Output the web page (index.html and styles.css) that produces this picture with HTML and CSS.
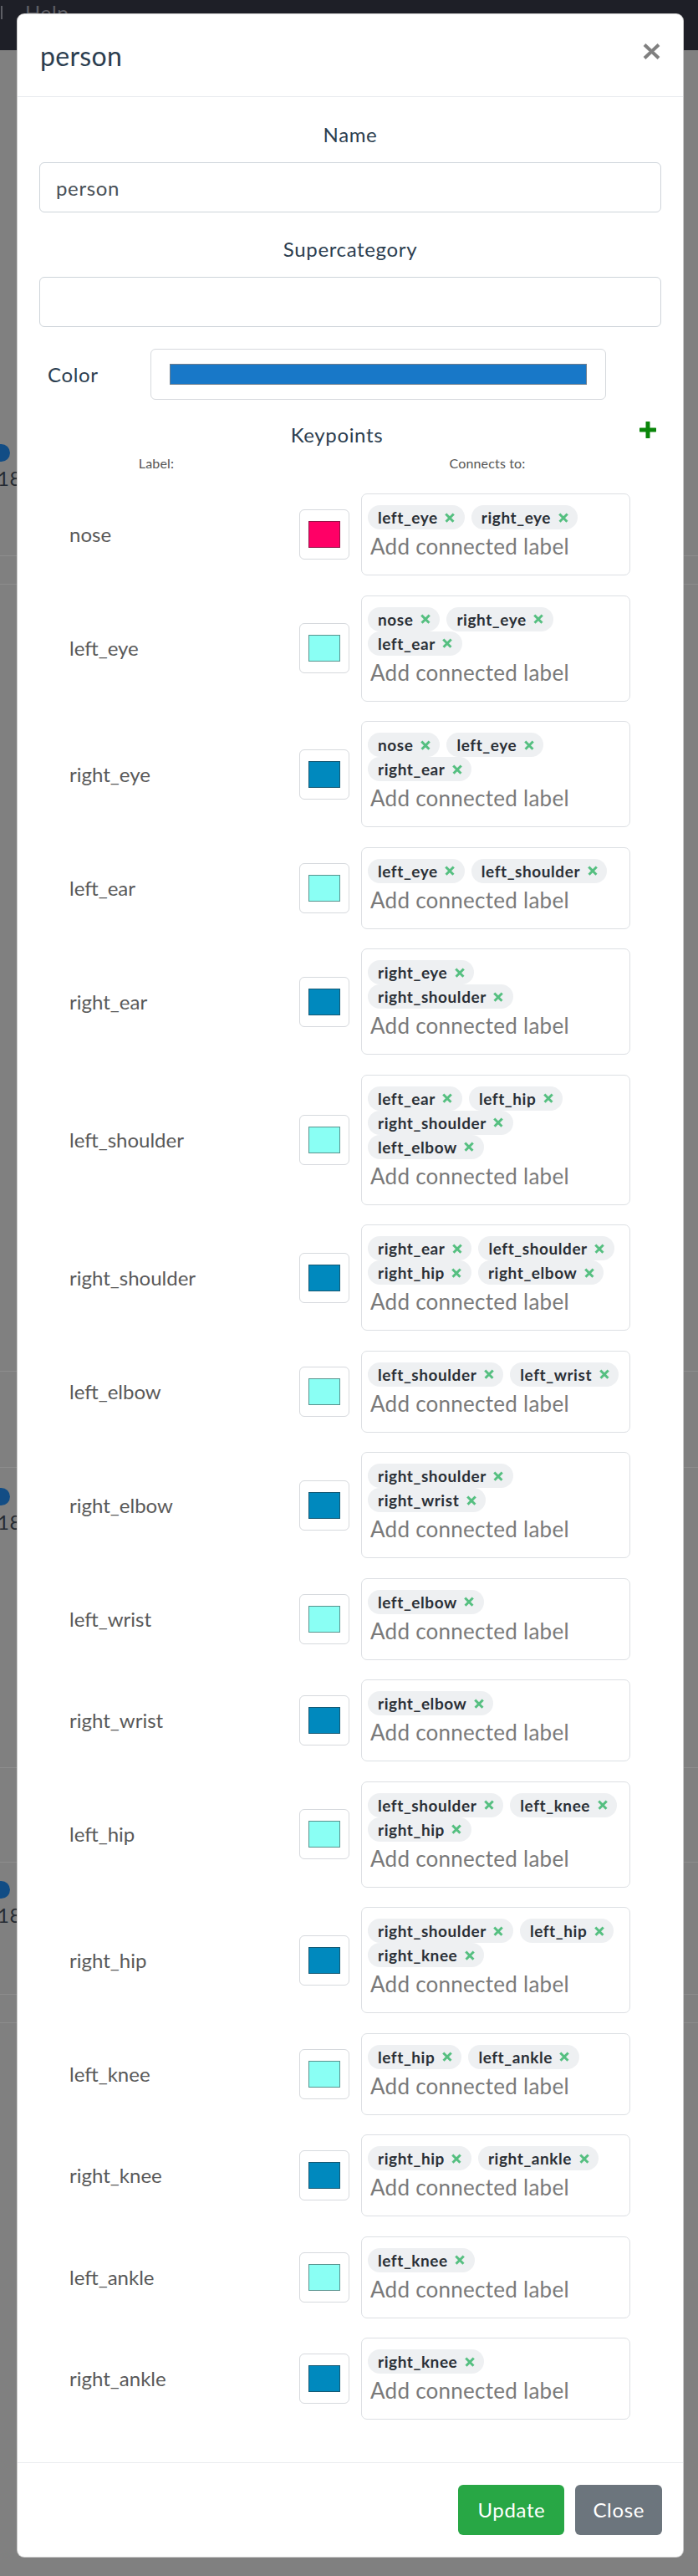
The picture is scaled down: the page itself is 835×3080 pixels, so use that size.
FILE: index.html
```html
<!DOCTYPE html>
<html lang="en">
<head>
<meta charset="utf-8">
<title>person</title>
<link rel="stylesheet" href="styles.css">
</head>
<body>
<div class="page">
  <nav class="navbar">
    <span class="nav-mark"></span>
    <span class="nav-link">Help</span>
  </nav>
  <div class="bg-list">
    <div class="bg-block bg-a"><div class="bg-entry"><span class="bg-dot"></span><span class="bg-num">18</span></div></div>
    <div class="bg-block bg-b"></div>
    <div class="bg-block bg-c"></div>
    <div class="bg-block bg-d"></div>
    <div class="bg-block bg-e"><div class="bg-entry"><span class="bg-dot"></span><span class="bg-num">18</span></div></div>
    <div class="bg-block bg-f"></div>
    <div class="bg-block bg-g"><div class="bg-entry"><span class="bg-dot"></span><span class="bg-num">18</span></div></div>
    <div class="bg-block bg-h"></div>
  </div>
</div>

<div class="modal">
  <div class="modal-header">
    <h5 class="modal-title">person</h5>
    <button class="close" type="button" aria-label="Close">
      <svg width="21" height="19" viewBox="0 0 21 19"><path d="M2 1.5 L19 17.5 M19 1.5 L2 17.5" stroke="#808080" stroke-width="4" fill="none"/></svg>
    </button>
  </div>

  <div class="modal-body">
    <div class="form-group">
      <label class="form-label">Name</label>
      <input class="form-control" type="text" value="person">
    </div>
    <div class="form-group">
      <label class="form-label">Supercategory</label>
      <input class="form-control" type="text" value="">
    </div>

    <div class="color-row">
      <span class="color-label">Color</span>
      <div class="color-box"><span class="color-bar"></span></div>
    </div>

    <div class="kp-title-row">
      <span class="kp-title">Keypoints</span>
      <svg class="plus" width="20" height="20" viewBox="0 0 20 20"><path d="M10 1 V19 M1 10 H19" stroke="#0a860a" stroke-width="5" stroke-linecap="round" fill="none"/></svg>
    </div>

    <div class="kp-head">
      <span class="kp-head-label">Label:</span>
      <span class="kp-head-conn">Connects to:</span>
    </div>

    <div class="kp-list">
      <div class="kp-row">
        <div class="kp-label">nose</div>
        <div class="kp-color"><span class="swatch c-pink"></span></div>
        <div class="kp-conn">
          <div class="tag-line"><span class="tag">left_eye<i class="tag-x"></i></span><span class="tag">right_eye<i class="tag-x"></i></span></div>
          <input class="conn-input" type="text" placeholder="Add connected label">
        </div>
      </div>

      <div class="kp-row">
        <div class="kp-label">left_eye</div>
        <div class="kp-color"><span class="swatch c-cyan"></span></div>
        <div class="kp-conn">
          <div class="tag-line"><span class="tag">nose<i class="tag-x"></i></span><span class="tag">right_eye<i class="tag-x"></i></span></div>
          <div class="tag-line"><span class="tag">left_ear<i class="tag-x"></i></span></div>
          <input class="conn-input" type="text" placeholder="Add connected label">
        </div>
      </div>

      <div class="kp-row">
        <div class="kp-label">right_eye</div>
        <div class="kp-color"><span class="swatch c-blue"></span></div>
        <div class="kp-conn">
          <div class="tag-line"><span class="tag">nose<i class="tag-x"></i></span><span class="tag">left_eye<i class="tag-x"></i></span></div>
          <div class="tag-line"><span class="tag">right_ear<i class="tag-x"></i></span></div>
          <input class="conn-input" type="text" placeholder="Add connected label">
        </div>
      </div>

      <div class="kp-row">
        <div class="kp-label">left_ear</div>
        <div class="kp-color"><span class="swatch c-cyan"></span></div>
        <div class="kp-conn">
          <div class="tag-line"><span class="tag">left_eye<i class="tag-x"></i></span><span class="tag">left_shoulder<i class="tag-x"></i></span></div>
          <input class="conn-input" type="text" placeholder="Add connected label">
        </div>
      </div>

      <div class="kp-row">
        <div class="kp-label">right_ear</div>
        <div class="kp-color"><span class="swatch c-blue"></span></div>
        <div class="kp-conn">
          <div class="tag-line"><span class="tag">right_eye<i class="tag-x"></i></span></div>
          <div class="tag-line"><span class="tag">right_shoulder<i class="tag-x"></i></span></div>
          <input class="conn-input" type="text" placeholder="Add connected label">
        </div>
      </div>

      <div class="kp-row">
        <div class="kp-label">left_shoulder</div>
        <div class="kp-color"><span class="swatch c-cyan"></span></div>
        <div class="kp-conn">
          <div class="tag-line"><span class="tag">left_ear<i class="tag-x"></i></span><span class="tag">left_hip<i class="tag-x"></i></span></div>
          <div class="tag-line"><span class="tag">right_shoulder<i class="tag-x"></i></span></div>
          <div class="tag-line"><span class="tag">left_elbow<i class="tag-x"></i></span></div>
          <input class="conn-input" type="text" placeholder="Add connected label">
        </div>
      </div>

      <div class="kp-row">
        <div class="kp-label">right_shoulder</div>
        <div class="kp-color"><span class="swatch c-blue"></span></div>
        <div class="kp-conn">
          <div class="tag-line"><span class="tag">right_ear<i class="tag-x"></i></span><span class="tag">left_shoulder<i class="tag-x"></i></span></div>
          <div class="tag-line"><span class="tag">right_hip<i class="tag-x"></i></span><span class="tag">right_elbow<i class="tag-x"></i></span></div>
          <input class="conn-input" type="text" placeholder="Add connected label">
        </div>
      </div>

      <div class="kp-row">
        <div class="kp-label">left_elbow</div>
        <div class="kp-color"><span class="swatch c-cyan"></span></div>
        <div class="kp-conn">
          <div class="tag-line"><span class="tag">left_shoulder<i class="tag-x"></i></span><span class="tag">left_wrist<i class="tag-x"></i></span></div>
          <input class="conn-input" type="text" placeholder="Add connected label">
        </div>
      </div>

      <div class="kp-row">
        <div class="kp-label">right_elbow</div>
        <div class="kp-color"><span class="swatch c-blue"></span></div>
        <div class="kp-conn">
          <div class="tag-line"><span class="tag">right_shoulder<i class="tag-x"></i></span></div>
          <div class="tag-line"><span class="tag">right_wrist<i class="tag-x"></i></span></div>
          <input class="conn-input" type="text" placeholder="Add connected label">
        </div>
      </div>

      <div class="kp-row">
        <div class="kp-label">left_wrist</div>
        <div class="kp-color"><span class="swatch c-cyan"></span></div>
        <div class="kp-conn">
          <div class="tag-line"><span class="tag">left_elbow<i class="tag-x"></i></span></div>
          <input class="conn-input" type="text" placeholder="Add connected label">
        </div>
      </div>

      <div class="kp-row">
        <div class="kp-label">right_wrist</div>
        <div class="kp-color"><span class="swatch c-blue"></span></div>
        <div class="kp-conn">
          <div class="tag-line"><span class="tag">right_elbow<i class="tag-x"></i></span></div>
          <input class="conn-input" type="text" placeholder="Add connected label">
        </div>
      </div>

      <div class="kp-row">
        <div class="kp-label">left_hip</div>
        <div class="kp-color"><span class="swatch c-cyan"></span></div>
        <div class="kp-conn">
          <div class="tag-line"><span class="tag">left_shoulder<i class="tag-x"></i></span><span class="tag">left_knee<i class="tag-x"></i></span></div>
          <div class="tag-line"><span class="tag">right_hip<i class="tag-x"></i></span></div>
          <input class="conn-input" type="text" placeholder="Add connected label">
        </div>
      </div>

      <div class="kp-row">
        <div class="kp-label">right_hip</div>
        <div class="kp-color"><span class="swatch c-blue"></span></div>
        <div class="kp-conn">
          <div class="tag-line"><span class="tag">right_shoulder<i class="tag-x"></i></span><span class="tag">left_hip<i class="tag-x"></i></span></div>
          <div class="tag-line"><span class="tag">right_knee<i class="tag-x"></i></span></div>
          <input class="conn-input" type="text" placeholder="Add connected label">
        </div>
      </div>

      <div class="kp-row">
        <div class="kp-label">left_knee</div>
        <div class="kp-color"><span class="swatch c-cyan"></span></div>
        <div class="kp-conn">
          <div class="tag-line"><span class="tag">left_hip<i class="tag-x"></i></span><span class="tag">left_ankle<i class="tag-x"></i></span></div>
          <input class="conn-input" type="text" placeholder="Add connected label">
        </div>
      </div>

      <div class="kp-row">
        <div class="kp-label">right_knee</div>
        <div class="kp-color"><span class="swatch c-blue"></span></div>
        <div class="kp-conn">
          <div class="tag-line"><span class="tag">right_hip<i class="tag-x"></i></span><span class="tag">right_ankle<i class="tag-x"></i></span></div>
          <input class="conn-input" type="text" placeholder="Add connected label">
        </div>
      </div>

      <div class="kp-row">
        <div class="kp-label">left_ankle</div>
        <div class="kp-color"><span class="swatch c-cyan"></span></div>
        <div class="kp-conn">
          <div class="tag-line"><span class="tag">left_knee<i class="tag-x"></i></span></div>
          <input class="conn-input" type="text" placeholder="Add connected label">
        </div>
      </div>

      <div class="kp-row">
        <div class="kp-label">right_ankle</div>
        <div class="kp-color"><span class="swatch c-blue"></span></div>
        <div class="kp-conn">
          <div class="tag-line"><span class="tag">right_knee<i class="tag-x"></i></span></div>
          <input class="conn-input" type="text" placeholder="Add connected label">
        </div>
      </div>
    </div>
  </div>

  <div class="modal-footer">
    <button class="btn btn-success" type="button">Update</button>
    <button class="btn btn-secondary" type="button">Close</button>
  </div>
</div>
</body>
</html>
```

FILE: styles.css
```css
* { box-sizing: border-box; }

html, body {
  margin: 0;
  padding: 0;
}

body {
  width: 835px;
  height: 3080px;
  overflow: hidden;
  position: relative;
  background: #808080;
  font-family: Lato, "Liberation Sans", sans-serif;
  letter-spacing: 0.04em;
  color: #2c3e50;
}

/* ---------- dimmed page behind the modal ---------- */
.navbar {
  height: 60px;
  background: #1e1f27;
  display: flex;
  align-items: flex-start;
  color: #5e5f66;
  font-size: 24px;
  line-height: 36px;
}
.nav-mark {
  width: 2px;
  height: 16px;
  margin: 7px 0 0 1px;
  background: #5e5f66;
}
.nav-link {
  margin: -3px 0 0 27px;
}

.bg-block {
  border-bottom: 1px solid #8d8d8d;
}
.bg-a { height: 605px; padding-top: 471px; }
.bg-b { height: 34px; }
.bg-c { height: 941px; }
.bg-d { height: 115px; }
.bg-e { height: 359px; padding-top: 24px; }
.bg-f { height: 113px; }
.bg-g { height: 158px; padding-top: 22px; }
.bg-h { height: 34px; }

.bg-entry {
  display: flex;
  flex-direction: column;
  align-items: flex-start;
}
.bg-dot {
  width: 21px;
  height: 21px;
  margin-left: -9px;
  border-radius: 50%;
  background: #124d85;
}
.bg-num {
  margin: 6px 0 0 -3px;
  font-size: 24px;
  line-height: 28px;
  color: #252b33;
}

/* ---------- modal ---------- */
.modal {
  position: absolute;
  left: 20px;
  top: 16px;
  width: 798px;
  background: #fff;
  border: 1px solid rgba(0, 0, 0, 0.2);
  border-radius: 9px;
}

.modal-header {
  height: 99px;
  display: flex;
  align-items: center;
  justify-content: space-between;
  padding: 0 27px 0 27px;
  border-bottom: 1px solid #e9ecef;
}
.modal-title {
  margin: 0;
  font-size: 32px;
  line-height: 45px;
  font-weight: 400;
  letter-spacing: 0.01em;
  color: #2c3e50;
}
.close {
  display: flex;
  padding: 0;
  margin: 0 0 9px 0;
  border: 0;
  background: transparent;
}

.modal-body {
  padding: 27px 26px 27px 26px;
}

.form-group {
  display: flex;
  flex-direction: column;
  margin-bottom: 26px;
}
.form-label {
  text-align: center;
  font-size: 24px;
  line-height: 36px;
  margin-bottom: 15px;
  color: #2c3e50;
}
.form-control {
  height: 60px;
  width: 100%;
  padding: 0 19px;
  border: 1px solid #ced4da;
  border-radius: 6px;
  font-family: inherit;
  letter-spacing: inherit;
  font-size: 24px;
  color: #495057;
  background: #fff;
  outline: none;
}

.color-row {
  display: flex;
  align-items: center;
  padding-left: 10px;
}
.color-label {
  width: 123px;
  font-size: 24px;
  line-height: 36px;
  color: #2c3e50;
}
.color-box {
  width: 545px;
  height: 61px;
  padding: 17px 22px;
  border: 1px solid #d6d9dd;
  border-radius: 6px;
  display: flex;
}
.color-bar {
  flex: 1;
  background: #1878c8;
  border: 1px solid #6e7d8c;
}

.kp-title-row {
  display: flex;
  align-items: flex-start;
  margin-top: 24px;
}
.kp-title {
  flex: 1;
  text-align: center;
  font-size: 24px;
  line-height: 36px;
  color: #2c3e50;
}
.plus {
  margin: 2px 6px 0 6px;
}

.kp-head {
  display: flex;
  margin-top: 4px;
  font-size: 16px;
  line-height: 24px;
  letter-spacing: 0.01em;
  color: #555;
}
.kp-head-label {
  width: 280px;
  text-align: center;
}
.kp-head-conn {
  width: 416px;
  margin-left: 48px;
  text-align: center;
}

.kp-list {
  margin-top: 24px;
}
.kp-row {
  display: flex;
  align-items: center;
  margin-bottom: 23.5px;
}
.kp-label {
  width: 311px;
  padding-left: 36px;
  font-size: 24px;
  line-height: 36px;
  letter-spacing: 0;
  color: #595959;
}
.kp-color {
  width: 60px;
  height: 60px;
  margin-right: 14px;
  border: 1px solid #d6d9dd;
  border-radius: 6px;
  display: flex;
  align-items: center;
  justify-content: center;
}
.swatch {
  width: 38px;
  height: 32px;
  border: 1px solid rgba(40, 40, 40, 0.5);
}
.c-pink { background: #ff0066; }
.c-cyan { background: #8afff4; }
.c-blue { background: #0089be; }

.kp-conn {
  width: 322px;
  padding: 13px 10px 14px 7px;
  border: 1px solid #dcdfe3;
  border-radius: 7px;
  display: flex;
  flex-direction: column;
}
.tag-line {
  display: flex;
  gap: 8px;
  height: 29px;
}
.tag {
  display: inline-flex;
  align-items: center;
  gap: 9px;
  height: 29px;
  padding: 0 12px;
  border-radius: 15px;
  background: #eef0f2;
  font-size: 19px;
  font-weight: 700;
  letter-spacing: 0.03em;
  color: #2a2f36;
}
.tag-x {
  position: relative;
  width: 11px;
  height: 11px;
}
.tag-x::before,
.tag-x::after {
  content: "";
  position: absolute;
  left: 50%;
  top: 50%;
  width: 13px;
  height: 2.6px;
  background: #55bf80;
  transform: translate(-50%, -50%) rotate(45deg);
}
.tag-x::after {
  transform: translate(-50%, -50%) rotate(-45deg);
}

.conn-input {
  height: 40px;
  width: 100%;
  padding: 0 0 0 3px;
  border: 0;
  outline: none;
  background: transparent;
  font-family: inherit;
  letter-spacing: 0.01em;
  font-size: 26px;
  color: #495057;
}
.conn-input::placeholder {
  color: #7a7a7a;
  opacity: 1;
}

.modal-footer {
  display: flex;
  justify-content: flex-end;
  gap: 13px;
  padding: 26px 25px 26px 25px;
  border-top: 1px solid #e9ecef;
}
.btn {
  height: 60px;
  padding: 0 21px;
  border: 0;
  border-radius: 6px;
  font-family: inherit;
  letter-spacing: inherit;
  font-size: 24px;
  color: #fff;
}
.btn-success {
  background: #28a745;
  padding: 0 23px;
}
.btn-secondary { background: #6c757d; }
```
